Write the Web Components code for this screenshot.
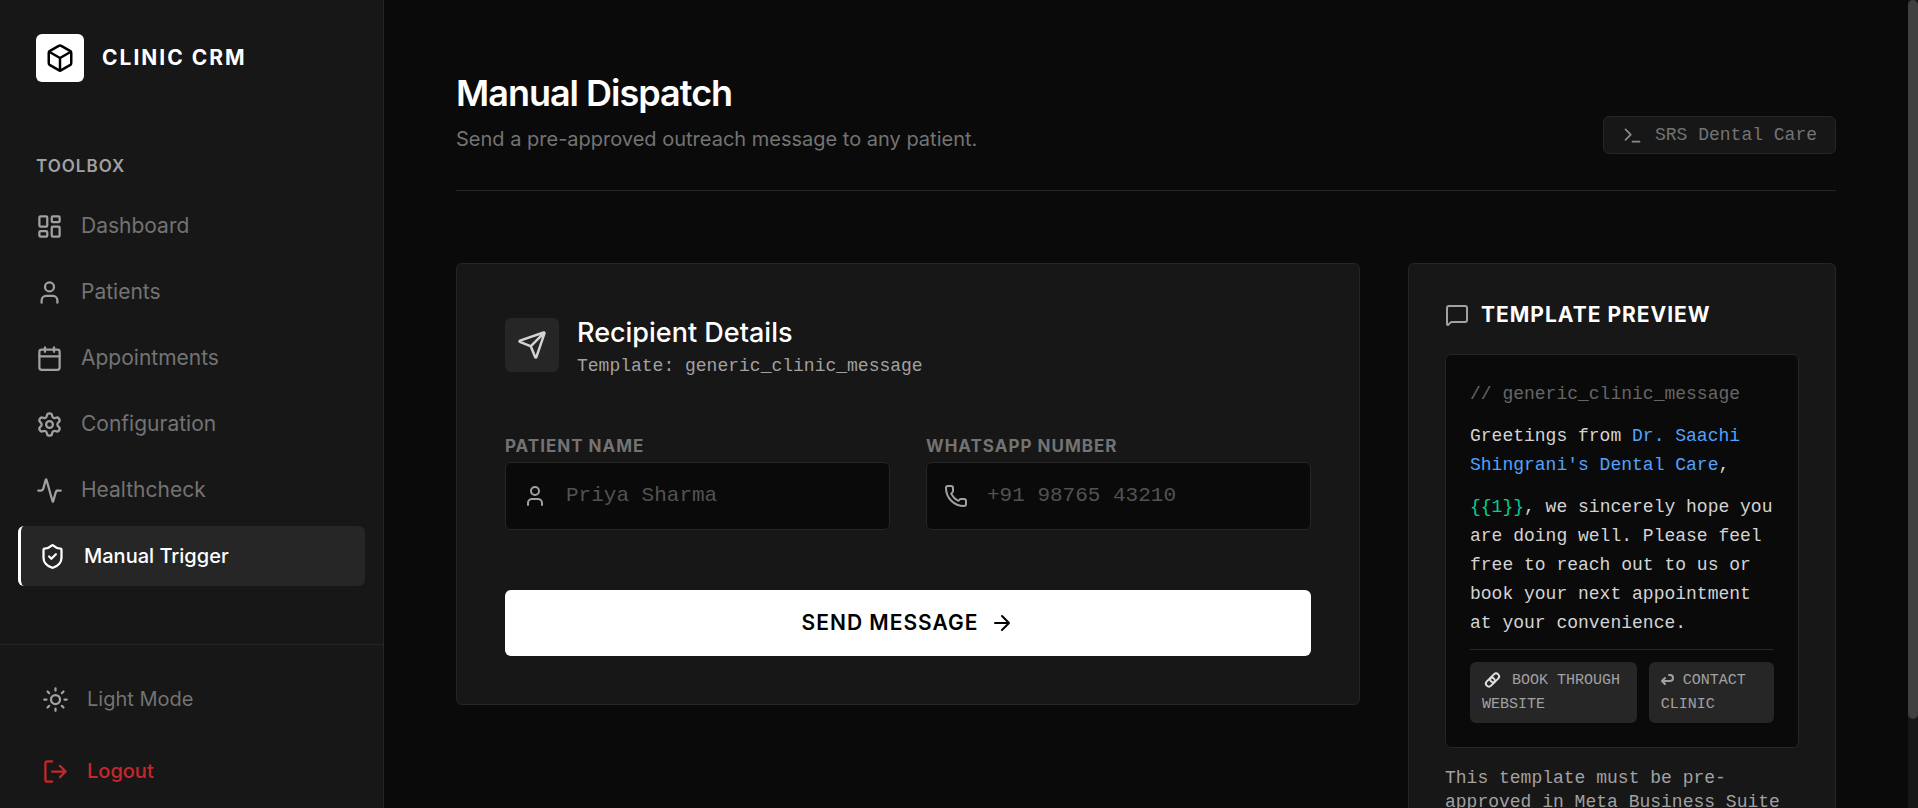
<!DOCTYPE html>
<html lang="en">
<head>
<meta charset="utf-8">
<meta name="viewport" content="width=device-width, initial-scale=1">
<title>Clinic CRM - Manual Dispatch</title>
<style>
    :root {
      --bg: #0a0a0a;
      --panel: #171717;
      --line: #262626;
      --muted: #737373;
      --soft: #a1a1a1;
      --mono: "Liberation Mono", monospace;
    }

    body {
      margin: 0;
      background: var(--bg);
      color: #fff;
      font-family: Inter, sans-serif;
      font-size: 20px;
      line-height: 30px;
    }

    .accent { color: #51a2ff; }
    .variable { color: #00d492; }
</style>
</head>
<body>
<crm-app>
    <crm-sidebar slot="sidebar">
        <nav-item icon="dashboard">Dashboard</nav-item>
        <nav-item icon="user">Patients</nav-item>
        <nav-item icon="calendar">Appointments</nav-item>
        <nav-item icon="settings">Configuration</nav-item>
        <nav-item icon="activity">Healthcheck</nav-item>
        <nav-item icon="shield" active>Manual Trigger</nav-item>
        <side-action slot="footer" icon="sun">Light Mode</side-action>
        <side-action slot="footer" icon="logout" danger>Logout</side-action>
    </crm-sidebar>
    <page-header>
        <span slot="title">Manual Dispatch</span>
        <span slot="subtitle">Send a pre-approved outreach message to any patient.</span>
        <span slot="badge">SRS Dental Care</span>
    </page-header>
    <dispatch-form slot="form">
        <form-field icon="user" label="PATIENT NAME" placeholder="Priya Sharma"></form-field>
        <form-field icon="phone" label="WHATSAPP NUMBER" placeholder="+91 98765 43210" type="tel"></form-field>
    </dispatch-form>
    <template-preview slot="preview">
        <span slot="name">// generic_clinic_message</span>
        <span slot="greeting">Greetings from <span class="accent">Dr. Saachi Shingrani's Dental Care</span>,</span>
        <span slot="body"><span class="variable">{{1}}</span>, we sincerely hope you are doing well. Please feel free to reach out to us or book your next appointment at your convenience.</span>
        <span slot="hint">This template must be pre-approved in Meta Business Suite</span>
    </template-preview>
</crm-app>

<script>
const icons = {
    box: '<path d="M21 8a2 2 0 0 0-1-1.73l-7-4a2 2 0 0 0-2 0l-7 4A2 2 0 0 0 3 8v8a2 2 0 0 0 1 1.73l7 4a2 2 0 0 0 2 0l7-4A2 2 0 0 0 21 16Z"/><path d="m3.3 7 8.7 5 8.7-5M12 22V12"/>',
    dashboard: '<rect width="7" height="9" x="3" y="3" rx="1"/><rect width="7" height="5" x="14" y="3" rx="1"/><rect width="7" height="9" x="14" y="12" rx="1"/><rect width="7" height="5" x="3" y="16" rx="1"/>',
    user: '<path d="M19 21v-2a4 4 0 0 0-4-4H9a4 4 0 0 0-4 4v2"/><circle cx="12" cy="7" r="4"/>',
    calendar: '<path d="M8 2v4M16 2v4M3 10h18"/><rect width="18" height="18" x="3" y="4" rx="2"/>',
    settings: '<path d="M9.671 4.136a2.34 2.34 0 0 1 4.659 0 2.34 2.34 0 0 0 3.319 1.915 2.34 2.34 0 0 1 2.33 4.033 2.34 2.34 0 0 0 0 3.831 2.34 2.34 0 0 1-2.33 4.033 2.34 2.34 0 0 0-3.319 1.915 2.34 2.34 0 0 1-4.659 0 2.34 2.34 0 0 0-3.32-1.915 2.34 2.34 0 0 1-2.33-4.033 2.34 2.34 0 0 0 0-3.831A2.34 2.34 0 0 1 6.35 6.051a2.34 2.34 0 0 0 3.319-1.915"/><circle cx="12" cy="12" r="3"/>',
    activity: '<path d="M22 12h-2.48a2 2 0 0 0-1.93 1.46l-2.35 8.36a.25.25 0 0 1-.48 0L9.24 2.18a.25.25 0 0 0-.48 0l-2.35 8.36A2 2 0 0 1 4.49 12H2"/>',
    shield: '<path d="M20 13c0 5-3.5 7.5-7.66 8.95a1 1 0 0 1-.67-.01C7.5 20.5 4 18 4 13V6a1 1 0 0 1 1-1c2 0 4.5-1.2 6.24-2.72a1.17 1.17 0 0 1 1.52 0C14.51 3.81 17 5 19 5a1 1 0 0 1 1 1z"/><path d="m9 12 2 2 4-4"/>',
    sun: '<circle cx="12" cy="12" r="4"/><path d="M12 2v2M12 20v2M4.93 4.93l1.41 1.41M17.66 17.66l1.41 1.41M2 12h2M20 12h2M6.34 17.66l-1.41 1.41M19.07 4.93l-1.41 1.41"/>',
    logout: '<path d="m16 17 5-5-5-5M21 12H9M9 21H5a2 2 0 0 1-2-2V5a2 2 0 0 1 2-2h4"/>',
    terminal: '<path d="M12 19h8M4 17l6-6-6-6"/>',
    send: '<path d="M14.536 21.686a.5.5 0 0 0 .937-.024l6.5-19a.496.496 0 0 0-.635-.635l-19 6.5a.5.5 0 0 0-.024.937l7.93 3.18a2 2 0 0 1 1.112 1.11zM21.854 2.147l-10.94 10.939"/>',
    phone: '<path d="M13.832 16.568a1 1 0 0 0 1.213-.303l.355-.465A2 2 0 0 1 17 15h3a2 2 0 0 1 2 2v3a2 2 0 0 1-2 2A18 18 0 0 1 2 4a2 2 0 0 1 2-2h3a2 2 0 0 1 2 2v3a2 2 0 0 1-.8 1.6l-.468.351a1 1 0 0 0-.292 1.233 14 14 0 0 0 6.392 6.384"/>',
    arrow: '<path d="M5 12h14M12 5l7 7-7 7"/>',
    message: '<path d="M22 17a2 2 0 0 1-2 2H6.828a2 2 0 0 0-1.414.586l-2.202 2.202A.71.71 0 0 1 2 21.286V5a2 2 0 0 1 2-2h16a2 2 0 0 1 2 2z"/>'
}

function attach (el, html) {
    const template = document.createElement('template')
    template.innerHTML = html
    const root = el.attachShadow({ mode: 'open' })
    root.appendChild(template.content.cloneNode(true))
    return root
}

class CrmIcon extends HTMLElement {
    constructor () {
        super()
        attach(this, `
            <style>
                :host { display: block; flex: none; width: var(--size, 24px); height: var(--size, 24px); }
                svg { display: block; width: 100%; height: 100%; }
            </style>
            <svg viewBox="0 0 24 24" fill="none" stroke="currentColor" stroke-width="2"
                stroke-linecap="round" stroke-linejoin="round" aria-hidden="true">${icons[this.getAttribute('name')]}</svg>
        `)
    }
}

class CrmApp extends HTMLElement {
    constructor () {
        super()
        attach(this, `
            <style>
                :host { display: grid; grid-template-columns: 384px minmax(0, 1fr) 10px; height: 100vh; overflow: hidden; }
                main { overflow-y: auto; scrollbar-width: none; padding: 72px; }
                .columns {
                    display: grid;
                    grid-template-columns: repeat(12, minmax(0, 1fr));
                    gap: 48px;
                    align-items: start;
                    margin-top: 72px;
                }
                .wide { grid-column: span 8; }
                .narrow { grid-column: span 4; }
                .rail { background: var(--panel); }
                .thumb { height: 89%; background: #404040; border-radius: 5px; }
            </style>
            <slot name="sidebar"></slot>
            <main>
                <slot></slot>
                <div class="columns">
                    <div class="wide"><slot name="form"></slot></div>
                    <div class="narrow"><slot name="preview"></slot></div>
                </div>
            </main>
            <div class="rail"><div class="thumb"></div></div>
        `)
    }
}

class CrmSidebar extends HTMLElement {
    constructor () {
        super()
        attach(this, `
            <style>
                :host {
                    display: flex;
                    flex-direction: column;
                    box-sizing: border-box;
                    background: var(--panel);
                    border-right: 1px solid var(--line);
                }
                .brand {
                    display: flex;
                    align-items: center;
                    gap: 18px;
                    padding: 34px 36px;
                    font-size: 21px;
                    font-weight: 700;
                    letter-spacing: 2px;
                }
                .logo {
                    --size: 30px;
                    display: grid;
                    place-items: center;
                    width: 48px;
                    height: 48px;
                    border-radius: 6px;
                    background: #fff;
                    color: #000;
                }
                nav { flex: 1; display: flex; flex-direction: column; gap: 6px; padding: 38px 18px 36px; }
                h2 {
                    margin: 0 18px 12px;
                    font-size: 17px;
                    line-height: 24px;
                    font-weight: 600;
                    letter-spacing: 1px;
                    color: var(--soft);
                }
                footer {
                    display: flex;
                    flex-direction: column;
                    gap: 12px;
                    padding: 24px 24px 7px;
                    border-top: 1px solid var(--line);
                }
            </style>
            <div class="brand">
                <div class="logo"><crm-icon name="box"></crm-icon></div>
                <span>CLINIC CRM</span>
            </div>
            <nav>
                <h2>TOOLBOX</h2>
                <slot></slot>
            </nav>
            <footer><slot name="footer"></slot></footer>
        `)
    }
}

class NavItem extends HTMLElement {
    constructor () {
        super()
        attach(this, `
            <style>
                :host { display: block; }
                a {
                    --size: 27px;
                    display: flex;
                    align-items: center;
                    gap: 18px;
                    padding: 15px 18px;
                    border-radius: 6px;
                    color: var(--muted);
                    font-size: 21px;
                    text-decoration: none;
                }
                crm-icon { color: var(--soft); }
                a:hover { background: var(--line); }
                :host([active]) a {
                    border-left: 3px solid #fff;
                    background: var(--line);
                    color: #fff;
                    font-size: 20px;
                    font-weight: 500;
                }
                :host([active]) crm-icon { color: #fff; }
            </style>
            <a href="#"><crm-icon name="${this.getAttribute('icon')}"></crm-icon><slot></slot></a>
        `)
    }
}

class SideAction extends HTMLElement {
    constructor () {
        super()
        attach(this, `
            <style>
                :host { display: block; }
                button {
                    --size: 27px;
                    display: flex;
                    align-items: center;
                    gap: 18px;
                    width: 100%;
                    padding: 15px 18px;
                    border: 0;
                    background: none;
                    color: var(--muted);
                    font: inherit;
                    text-align: left;
                    cursor: pointer;
                }
                crm-icon { color: var(--soft); }
                :host([danger]) button { color: #c9262b; font-weight: 500; }
                :host([danger]) crm-icon { color: inherit; }
            </style>
            <button type="button"><crm-icon name="${this.getAttribute('icon')}"></crm-icon><slot></slot></button>
        `)
    }
}

class PageHeader extends HTMLElement {
    constructor () {
        super()
        attach(this, `
            <style>
                :host {
                    display: flex;
                    justify-content: space-between;
                    align-items: flex-end;
                    padding-bottom: 36px;
                    border-bottom: 1px solid var(--line);
                }
                h1 { margin: 0 0 10px; font-size: 36px; line-height: 42px; font-weight: 600; letter-spacing: -1px; }
                p { margin: 0; color: var(--muted); }
                .badge {
                    --size: 21px;
                    display: flex;
                    align-items: center;
                    gap: 12px;
                    padding: 6px 18px;
                    border: 1px solid var(--line);
                    border-radius: 6px;
                    background: var(--panel);
                    color: var(--muted);
                    font: 18px/24px var(--mono);
                }
                crm-icon { color: #8a8a8a; }
            </style>
            <div>
                <h1><slot name="title"></slot></h1>
                <p><slot name="subtitle"></slot></p>
            </div>
            <div class="badge"><crm-icon name="terminal"></crm-icon><slot name="badge"></slot></div>
        `)
    }
}

class DispatchForm extends HTMLElement {
    constructor () {
        super()
        attach(this, `
            <style>
                :host {
                    display: block;
                    padding: 48px;
                    border: 1px solid var(--line);
                    border-radius: 6px;
                    background: var(--panel);
                }
                .head { display: flex; align-items: center; gap: 18px; }
                .tile {
                    --size: 30px;
                    display: grid;
                    place-items: center;
                    width: 54px;
                    height: 54px;
                    border-radius: 6px;
                    background: var(--line);
                    color: #d4d4d4;
                }
                h2 { margin: 0; font-size: 27px; line-height: 42px; font-weight: 500; }
                p { margin: 0; color: var(--soft); font: 18px/24px var(--mono); }
                .fields { display: grid; grid-template-columns: 1fr 1fr; gap: 36px; margin: 56px 0 60px; }
                button {
                    display: flex;
                    align-items: center;
                    justify-content: center;
                    gap: 12px;
                    width: 100%;
                    padding: 18px;
                    border: 0;
                    border-radius: 6px;
                    background: #fff;
                    color: #000;
                    font: inherit;
                    font-size: 21px;
                    font-weight: 600;
                    letter-spacing: 1px;
                    cursor: pointer;
                }
            </style>
            <form>
                <div class="head">
                    <div class="tile"><crm-icon name="send"></crm-icon></div>
                    <div>
                        <h2>Recipient Details</h2>
                        <p>Template: generic_clinic_message</p>
                    </div>
                </div>
                <div class="fields"><slot></slot></div>
                <button type="button">SEND MESSAGE<crm-icon name="arrow"></crm-icon></button>
            </form>
        `)
    }
}

class FormField extends HTMLElement {
    constructor () {
        super()
        attach(this, `
            <style>
                :host { display: block; }
                label {
                    display: block;
                    margin-bottom: 4px;
                    color: var(--muted);
                    font-size: 17px;
                    line-height: 24px;
                    font-weight: 700;
                    letter-spacing: 1px;
                }
                .box {
                    display: flex;
                    align-items: center;
                    gap: 19px;
                    padding: 0 17px;
                    border: 1px solid var(--line);
                    border-radius: 6px;
                    background: var(--bg);
                    color: var(--soft);
                }
                .box:focus-within { border-color: var(--muted); }
                input {
                    flex: 1;
                    min-width: 0;
                    padding: 18px 0;
                    border: 0;
                    outline: 0;
                    background: none;
                    color: #fff;
                    font: 21px/30px var(--mono);
                }
                input::placeholder { color: #525252; }
            </style>
            <label for="field">${this.getAttribute('label')}</label>
            <div class="box">
                <crm-icon name="${this.getAttribute('icon')}"></crm-icon>
                <input id="field" type="${this.getAttribute('type') || 'text'}" placeholder="${this.getAttribute('placeholder')}">
            </div>
        `)
    }
}

class TemplatePreview extends HTMLElement {
    constructor () {
        super()
        attach(this, `
            <style>
                :host {
                    display: block;
                    padding: 36px;
                    border: 1px solid var(--line);
                    border-radius: 6px;
                    background: var(--panel);
                }
                h2 {
                    display: flex;
                    align-items: center;
                    gap: 12px;
                    margin: 0 0 24px;
                    font-size: 21px;
                    line-height: 30px;
                    font-weight: 700;
                    letter-spacing: 1px;
                    white-space: nowrap;
                }
                h2 crm-icon { color: var(--soft); }
                .message {
                    padding: 25px 24px 24px;
                    border: 1px solid var(--line);
                    border-radius: 6px;
                    background: var(--bg);
                    color: #d4d4d4;
                    font: 18px/29px var(--mono);
                }
                .message p { margin: 0 0 13px; }
                .message .name { color: #666; }
                .message .body { margin-bottom: 11px; }
                .chips {
                    display: grid;
                    grid-template-columns: 4fr 3fr;
                    gap: 12px;
                    padding-top: 12px;
                    border-top: 1px solid var(--line);
                }
                .chips span {
                    padding: 7px 12px 6px;
                    border-radius: 6px;
                    background: var(--line);
                    color: var(--soft);
                    font-size: 15px;
                    line-height: 24px;
                }
                .chips svg { height: 16px; vertical-align: middle; fill: none; stroke-linecap: round; stroke-linejoin: round; }
                .link { width: 21px; stroke: #e0e0e0; stroke-width: 2; }
                .reply { width: 13px; stroke: currentColor; stroke-width: 2; }
                .hint { margin: 18px 0 0; color: var(--soft); font: 18px/24px var(--mono); }
            </style>
            <h2><crm-icon name="message"></crm-icon>TEMPLATE PREVIEW</h2>
            <div class="message">
                <p class="name"><slot name="name"></slot></p>
                <p><slot name="greeting"></slot></p>
                <p class="body"><slot name="body"></slot></p>
                <div class="chips">
                    <span><svg class="link" viewBox="0 0 21 16" aria-hidden="true"><g transform="rotate(-45 10.5 8)"><rect x="2.5" y="5" width="10" height="6" rx="3"/><rect x="8.5" y="5" width="10" height="6" rx="3"/></g></svg> BOOK THROUGH WEBSITE</span>
                    <span><svg class="reply" viewBox="0 0 13 16" aria-hidden="true"><path d="M1 9h8a3 3 0 0 0 0-6H8M4 6L1 9l3 3"/></svg> CONTACT CLINIC</span>
                </div>
            </div>
            <p class="hint"><slot name="hint"></slot></p>
        `)
    }
}

customElements.define('crm-icon', CrmIcon)
customElements.define('crm-app', CrmApp)
customElements.define('crm-sidebar', CrmSidebar)
customElements.define('nav-item', NavItem)
customElements.define('side-action', SideAction)
customElements.define('page-header', PageHeader)
customElements.define('dispatch-form', DispatchForm)
customElements.define('form-field', FormField)
customElements.define('template-preview', TemplatePreview)
</script>
</body>
</html>
